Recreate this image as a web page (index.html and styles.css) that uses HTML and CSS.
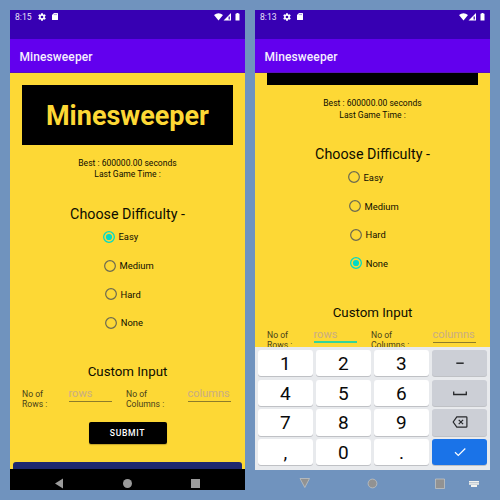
FILE: index.html
```html
<!DOCTYPE html>
<html lang="en">
<head>
<meta charset="utf-8">
<title>Minesweeper</title>
<link rel="stylesheet" href="styles.css">
</head>
<body>
<svg class="defs" width="0" height="0" aria-hidden="true">
  <symbol id="gear" viewBox="1.500 1.500 21 21"><path fill="#fff" fill-rule="evenodd" d="M19.4 13a7.500 7.500 0 0 0 0-2l2.500-2-2.400-4.200-3 1.200a7 7 0 0 0-1.800-1L14.300 2H9.700l-.4 3a7 7 0 0 0-1.800 1l-3-1.200L2.100 9l2.500 2a7.500 7.500 0 0 0 0 2l-2.500 2 2.400 4.200 3-1.200a7 7 0 0 0 1.800 1l.4 3h4.600l.4-3a7 7 0 0 0 1.800-1l3 1.200 2.400-4.200-2.500-2zM12 8.500a3.500 3.500 0 1 1 0 7 3.500 3.500 0 0 1 0-7z"/></symbol>
  <symbol id="card" viewBox="0 0 6 7"><path fill="#fff" d="M2 0h3.500q.5 0 .5.500v6q0 .5-.5.500h-5Q0 7 0 6.500V2z"/><path stroke="#3700b3" stroke-width=".4" d="M2.300.9v1.200M3.400.9v1.200M4.500.9v1.200"/></symbol>
  <symbol id="signals" viewBox="0 0 27 8"><path fill="#fff" d="M0 2q4.500-3.500 9 0L4.500 7.500zM17 0v7.500H9.500z"/><path fill="#3700b3" d="M14.600 3.500h1.200v3h-1.200z"/><path fill="#fff" d="M22.500 0h2v.8h1v6.700h-4V.8h1z"/></symbol>
  <symbol id="radio-off" viewBox="0 0 12 12"><circle cx="6" cy="6" r="5.350" fill="none" stroke="#6d6b50" stroke-width="1.200"/></symbol>
  <symbol id="radio-on" viewBox="0 0 12 12"><circle cx="6" cy="6" r="5.350" fill="none" stroke="#03dac5" stroke-width="1.300"/><circle cx="6" cy="6" r="3.100" fill="#03dac5"/></symbol>
</svg>

<main class="stage">
  <section class="phone">
    <div class="status"><span class="clock">8:15</span><svg class="gear"><use href="#gear"/></svg><svg class="card"><use href="#card"/></svg><svg class="signals"><use href="#signals"/></svg></div>
    <header class="appbar">Minesweeper</header>
    <div class="screen">
      <div class="content">
        <h1 class="banner"><span>Minesweeper</span></h1>
        <div class="stats"><div class="best">Best : 600000.00 seconds</div><div class="last">Last Game Time :</div></div>
        <h2 class="choose">Choose Difficulty -</h2>
        <div class="options">
          <label class="option easy"><svg class="radio"><use href="#radio-on"/></svg>Easy</label>
          <label class="option medium"><svg class="radio"><use href="#radio-off"/></svg>Medium</label>
          <label class="option hard"><svg class="radio"><use href="#radio-off"/></svg>Hard</label>
          <label class="option none"><svg class="radio"><use href="#radio-off"/></svg>None</label>
        </div>
        <h3 class="custom">Custom Input</h3>
        <div class="inputs">
          <div class="label">No of<br>Rows :</div><div class="field rows">rows</div>
          <div class="label second">No of<br>Columns :</div><div class="field cols">columns</div>
        </div>
        <div class="submit"><span>SUBMIT</span></div>
        <div class="panel"></div>
      </div>
    </div>
    <svg class="nav" viewBox="0 0 235 21"><path fill="#9b9b9b" d="M45 14.500l8-5v10zM181 10h9v9h-9z"/><circle cx="117.500" cy="14.500" r="4.500" fill="#9b9b9b"/></svg>
  </section>

  <section class="phone">
    <div class="status"><span class="clock">8:13</span><svg class="gear"><use href="#gear"/></svg><svg class="card"><use href="#card"/></svg><svg class="signals"><use href="#signals"/></svg></div>
    <header class="appbar">Minesweeper</header>
    <div class="screen short">
      <div class="content">
        <div class="banner edge"></div>
        <div class="stats"><div class="best">Best : 600000.00 seconds</div><div class="last">Last Game Time :</div></div>
        <h2 class="choose">Choose Difficulty -</h2>
        <div class="options">
          <label class="option easy"><svg class="radio"><use href="#radio-off"/></svg>Easy</label>
          <label class="option medium"><svg class="radio"><use href="#radio-off"/></svg>Medium</label>
          <label class="option hard"><svg class="radio"><use href="#radio-off"/></svg>Hard</label>
          <label class="option none"><svg class="radio"><use href="#radio-on"/></svg>None</label>
        </div>
        <h3 class="custom">Custom Input</h3>
        <div class="inputs">
          <div class="label">No of<br>Rows :</div><div class="field rows focused">rows</div>
          <div class="label second">No of<br>Columns :</div><div class="field cols">columns</div>
        </div>
      </div>
    </div>
    <div class="keyboard">
      <b>1</b><b>2</b><b>3</b><b class="side"><svg viewBox="0 0 16 12"><path d="M4.300 6.200h7.400" stroke-width="1.500"/></svg></b>
      <b>4</b><b>5</b><b>6</b><b class="side"><svg viewBox="0 0 16 12"><path d="M1.700 4.500v3h12.600v-3" stroke-width="1.300"/></svg></b>
      <b>7</b><b>8</b><b>9</b><b class="side"><svg viewBox="0 0 16 12"><path d="M4.800.8h9.400q.7 0 .7.700v9q0 .7-.7.700H4.800L1.200 6zM6.700 3.800l4.400 4.400m0-4.400L6.700 8.200" stroke-width="1.200"/></svg></b>
      <b>,</b><b>0</b><b>.</b><b class="side done"><svg viewBox="0 0 16 12"><path d="M3 6.300l3.300 3.200 7-7" stroke-width="1.200"/></svg></b>
    </div>
    <svg class="nav clear" viewBox="0 0 235 20"><g fill="#929292" stroke="#c9c9c4" stroke-width=".7"><path d="M45 8.500h9.500l-4.700 9z"/><circle cx="117.500" cy="13.500" r="4.400"/><path d="M180.500 9h9v9.500h-9z"/></g><path fill="#f4f4f0" d="M214 11h10v4h-2v2h-6v-2h-2z"/><path stroke="#8a9fb5" stroke-width=".5" d="M214 12.500h10M214 14.200h10"/></svg>
  </section>
</main>
</body>
</html>
```
FILE: styles.css
```css
* { box-sizing: border-box; }
body { margin: 0; background: #7093be; font-family: Roboto, sans-serif; color: #0d0d00; }
.defs { display: block; }
.stage { display: flex; gap: 10px; padding: 10px; height: 500px; overflow: hidden; }
.phone { width: 235px; height: 480px; display: flex; flex-direction: column; }
h1, h2, h3 { margin: 0; font-weight: 400; white-space: nowrap; }

.status { height: 29px; flex: none; background: #3700b3; display: flex; align-items: flex-start; padding: 3px 5px 0; color: #e9e2f7; }
.clock { font-size: 8.600px; line-height: 9px; width: 17px; }
.gear { width: 8px; height: 8px; margin-left: 6px; }
.card { width: 6px; height: 7px; margin-left: 6px; }
.signals { width: 27px; height: 8px; margin-left: auto; margin-right: -1px; }
.appbar { height: 34px; flex: none; background: #6200ee; border-bottom: 1px solid #5a10bd; padding-left: 9.500px; color: #f6f0ff; font-size: 12px; font-weight: 500; line-height: 36px; letter-spacing: .1px; }

.screen { height: 396px; flex: none; overflow: hidden; background: #fdd835; }
.short { height: 274px; }
.content { display: flex; flex-direction: column; }
.banner { flex: none; height: 60px; margin: 11.500px 12px 0; background: #000; color: #fdd835; text-align: center; font-size: 27px; font-weight: 700; line-height: 63px; }
.edge { height: 12px; margin-top: 0; }
.stats { height: 59px; padding-top: 13px; text-align: center; font-size: 8.550px; line-height: 11.500px; }
.choose { height: 20px; font-size: 14.300px; line-height: 20px; text-align: center; }
.options { margin-top: -1px; }
.option { display: flex; align-items: center; height: 28.700px; gap: 3.500px; font-size: 9.400px; }
.easy { padding-left: 93px; }
.medium { padding-left: 94px; }
.hard { padding-left: 95px; }
.none { padding-left: 95.300px; }
.radio { width: 12px; height: 12px; flex: none; }
.custom { height: 20px; margin-top: 24px; font-size: 13.300px; line-height: 21px; text-align: center; }
.inputs { display: flex; height: 19px; margin: 7px 12px 0; overflow: hidden; }
.label { width: 46.500px; padding-top: 1px; font-size: 8.600px; line-height: 10px; color: #474019; white-space: nowrap; }
.second { margin-left: 14.500px; width: 61.500px; }
.field { width: 43px; height: 14px; border-bottom: 1px solid #8d7c2b; color: #c9ad83; font-size: 11px; line-height: 11px; }
.focused { height: 14.500px; border-bottom: 2px solid #35d49a; }
.submit { width: 78px; height: 22px; margin: 15px 0 0 78.500px; background: #000; border-radius: 2px; color: #fff; font-size: 8.600px; font-weight: 500; line-height: 23px; letter-spacing: .7px; text-align: center; box-shadow: 0 1px 1px #73631c70; }
.panel { flex: none; height: 20px; margin: 18px 3px 0; background: #1f286f; border-radius: 3px; }
.nav { width: 235px; height: 21px; flex: none; background: #000; }

.keyboard { height: 123px; flex: none; display: grid; grid-template-columns: repeat(4, 55.500px); grid-template-rows: repeat(4, 26.200px); gap: 3.500px 2.600px; padding: 3px 2.500px; background: #e8eaed; }
.keyboard b { display: flex; align-items: center; justify-content: center; padding-top: 1px; border-radius: 3px; background: #fff; box-shadow: 0 1px 0 #bfc1c5; color: #090909; font-size: 19px; font-weight: 400; line-height: 1; }
.keyboard .side { background: #cccfd6; padding: 0; }
.keyboard .done { background: #1a73e8; }
.side svg { width: 16px; height: 12px; fill: none; stroke: #26282b; }
.done svg { stroke: #fff; }
.clear { height: 20px; background: none; }
```
